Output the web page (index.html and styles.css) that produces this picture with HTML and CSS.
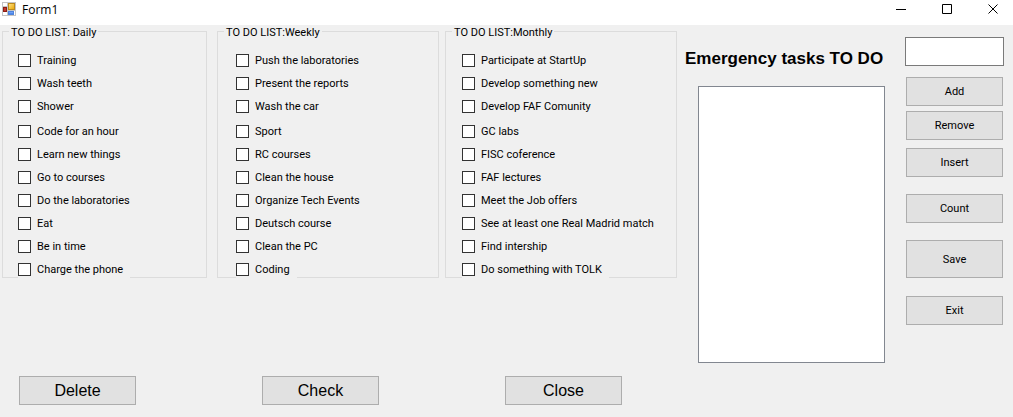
FILE: index.html
```html
<!DOCTYPE html>
<html lang="en">
<head>
<meta charset="utf-8">
<title>Form1</title>
<link rel="stylesheet" href="styles.css">
</head>
<body>
<header class="titlebar">
  <svg class="app-icon" width="14" height="14" viewBox="0 0 14 14" aria-hidden="true">
    <defs>
      <linearGradient id="gold" x1="0" y1="0" x2="1" y2="1"><stop offset="0" stop-color="#ffe48a"/><stop offset="1" stop-color="#e9a400"/></linearGradient>
      <linearGradient id="blue" x1="0" y1="0" x2="0" y2="1"><stop offset="0" stop-color="#8db9ff"/><stop offset="1" stop-color="#2f6fe0"/></linearGradient>
    </defs>
    <rect width="14" height="14" fill="#c4c4c4"/>
    <path d="M1 1h4v3H1zM1 10h4v3H1zM12 9h1v4h-1z" fill="#fff"/>
    <rect x="1.5" y="5.5" width="3" height="4" fill="#c4372a" stroke="#8d1d14"/>
    <rect x="6.500" y="1.500" width="6" height="6" fill="url(#gold)" stroke="#bd8a1c"/>
    <rect x="6.500" y="9.500" width="5" height="3" fill="url(#blue)" stroke="#4e83dc"/>
  </svg>
  <h1 class="window-title">Form1</h1>
  <div class="window-controls">
    <button class="window-button" type="button" aria-label="Minimize"><svg width="11" height="11" viewBox="0 0 11 11"><path d="M0 5.500h10"/></svg></button>
    <button class="window-button" type="button" aria-label="Maximize"><svg width="11" height="11" viewBox="0 0 11 11"><path d="M.5.5h9v9h-9z"/></svg></button>
    <button class="window-button" type="button" aria-label="Close window"><svg width="11" height="11" viewBox="0 0 11 11"><path d="M.5.5l9 9M9.500.5l-9 9"/></svg></button>
  </div>
</header>
<main class="form">
  <section class="lists">
    <div class="groups">
      <fieldset class="group group-daily">
        <legend>TO DO LIST: Daily</legend>
        <div class="tasks">
          <label class="task"><input type="checkbox">Training</label>
          <label class="task"><input type="checkbox">Wash teeth</label>
          <label class="task"><input type="checkbox">Shower</label>
          <label class="task"><input type="checkbox">Code for an hour</label>
          <label class="task"><input type="checkbox">Learn new things</label>
          <label class="task"><input type="checkbox">Go to courses</label>
          <label class="task"><input type="checkbox">Do the laboratories</label>
          <label class="task"><input type="checkbox">Eat</label>
          <label class="task"><input type="checkbox">Be in time</label>
          <label class="task"><input type="checkbox">Charge the phone</label>
        </div>
      </fieldset>
      <fieldset class="group group-weekly">
        <legend>TO DO LIST:Weekly</legend>
        <div class="tasks">
          <label class="task"><input type="checkbox">Push the laboratories</label>
          <label class="task"><input type="checkbox">Present the reports</label>
          <label class="task"><input type="checkbox">Wash the car</label>
          <label class="task"><input type="checkbox">Sport</label>
          <label class="task"><input type="checkbox">RC courses</label>
          <label class="task"><input type="checkbox">Clean the house</label>
          <label class="task"><input type="checkbox">Organize Tech Events</label>
          <label class="task"><input type="checkbox">Deutsch course</label>
          <label class="task"><input type="checkbox">Clean the PC</label>
          <label class="task"><input type="checkbox">Coding</label>
        </div>
      </fieldset>
      <fieldset class="group group-monthly">
        <legend>TO DO LIST:Monthly</legend>
        <div class="tasks">
          <label class="task"><input type="checkbox">Participate at StartUp</label>
          <label class="task"><input type="checkbox">Develop something new</label>
          <label class="task"><input type="checkbox">Develop FAF Comunity</label>
          <label class="task"><input type="checkbox">GC labs</label>
          <label class="task"><input type="checkbox">FISC coference</label>
          <label class="task"><input type="checkbox">FAF lectures</label>
          <label class="task"><input type="checkbox">Meet the Job offers</label>
          <label class="task"><input type="checkbox">See at least one Real Madrid match</label>
          <label class="task"><input type="checkbox">Find intership</label>
          <label class="task"><input type="checkbox">Do something with TOLK</label>
        </div>
      </fieldset>
    </div>
    <div class="list-actions">
      <button class="button button-large" type="button">Delete</button>
      <button class="button button-large" type="button">Check</button>
      <button class="button button-large" type="button">Close</button>
    </div>
  </section>
  <section class="emergency">
    <label class="emergency-title" for="emergency-list">Emergency tasks TO DO</label>
    <select class="listbox" id="emergency-list" multiple></select>
  </section>
  <section class="editor">
    <input class="textbox" type="text" aria-label="Emergency task">
    <div class="editor-actions">
      <button class="button" type="button">Add</button>
      <button class="button button-remove" type="button">Remove</button>
      <button class="button button-insert" type="button">Insert</button>
      <button class="button button-spaced" type="button">Count</button>
      <button class="button button-spaced button-save" type="button">Save</button>
      <button class="button button-exit" type="button">Exit</button>
    </div>
  </section>
</main>
</body>
</html>
```
FILE: styles.css
```css
* {
  box-sizing: border-box;
}

body {
  margin: 0;
  min-height: 100vh;
  background: #f0f0f0;
  color: #000;
  font: 11px/15px Roboto, "Liberation Sans", Arial, sans-serif;
}

button,
input,
select {
  margin: 0;
  font: inherit;
  color: inherit;
  border-radius: 0;
}

.titlebar {
  display: flex;
  align-items: flex-start;
  height: 25px;
  padding-left: 2px;
  background: #fff;
}

.app-icon {
  margin: 2px 6px 0 0;
}

.window-title {
  margin: 2px 0 0;
  font: 12px/16px "Open Sans", "Noto Sans", sans-serif;
}

.window-controls {
  display: flex;
  gap: 6px;
  margin-left: auto;
}

.window-button {
  display: flex;
  justify-content: center;
  width: 40px;
  height: 25px;
  padding: 4px 0 0;
  border: 0;
  background: none;
}

.window-button svg {
  fill: none;
  stroke: #000;
}

.form {
  display: grid;
  grid-template-columns: 683fr 220fr 99fr;
  padding: 0 9px 11px 2px;
}

.lists {
  padding-right: 8px;
}

.groups {
  display: grid;
  grid-template-columns: 209fr 222fr 232fr;
  gap: 6px;
}

.group {
  min-width: 0;
  margin: 0;
  padding: 0;
  border: 1px solid #dcdcdc;
}

.group legend {
  height: 13px;
  margin-left: 6px;
  padding: 0 2px;
}

.group-daily {
  margin-right: 4px;
}

.tasks {
  display: flex;
  flex-direction: column;
  align-items: flex-start;
  gap: 6px;
  padding: 14px 0 0 16px;
}

.group-daily .tasks {
  padding-left: 15px;
}

.group-weekly .tasks {
  padding-left: 18px;
}

.task {
  display: flex;
  align-items: center;
  gap: 6px;
  height: 17px;
  padding-right: 7px;
  background: #f0f0f0;
  white-space: nowrap;
}

.task:nth-child(4) {
  margin-top: 2px;
}

.task:last-child {
  margin-bottom: -1px;
}

.task input {
  appearance: none;
  width: 13px;
  height: 13px;
  border: 1px solid #333;
  background: #fff;
}

.task input:checked {
  background: #333;
  box-shadow: inset 0 0 0 2px #fff;
}

.list-actions {
  display: flex;
  gap: 126px;
  margin-top: 98px;
  padding-left: 17px;
}

.button {
  height: 29px;
  padding: 0;
  border: 1px solid #adadad;
  background: #e1e1e1;
}

.button-large {
  width: 117px;
  font: 16px/18px "Liberation Sans", Arial, sans-serif;
}

.emergency {
  padding: 24px 20px 0 0;
}

.emergency-title {
  display: block;
  font: bold 17px/20px "Liberation Sans", Arial, sans-serif;
  white-space: nowrap;
}

.listbox {
  display: block;
  width: calc(100% - 13px);
  height: 277px;
  margin: 17px 0 0 13px;
  border: 1px solid #828790;
  background: #fff;
}

.editor {
  padding-top: 12px;
}

.textbox {
  display: block;
  width: 100%;
  height: 29px;
  padding: 2px 4px;
  border: 1px solid #7a7a7a;
  background: #fff;
}

.editor-actions {
  display: flex;
  flex-direction: column;
  padding: 11px 1px 0;
}

.button-remove {
  margin-top: 5px;
}

.button-insert {
  margin-top: 8px;
}

.button-spaced {
  margin-top: 17px;
}

.button-save {
  height: 38px;
}

.button-exit {
  margin-top: 18px;
}
```
